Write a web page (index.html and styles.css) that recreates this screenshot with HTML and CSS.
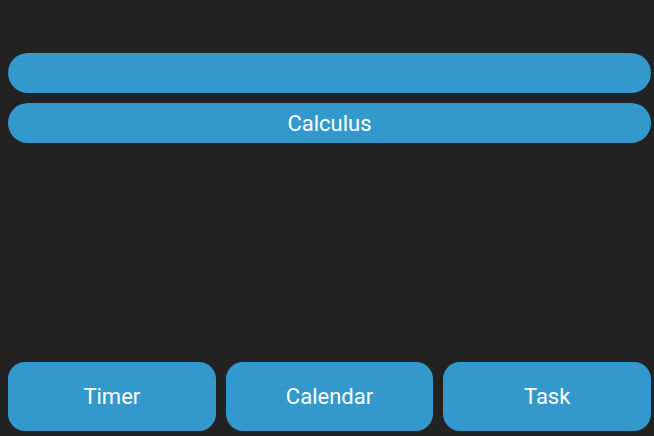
FILE: index.html
```html
<!DOCTYPE html>
<html>
<head>
<meta charset="utf-8">
<link rel="stylesheet" href="styles.css">
</head>
<body>
<div class="app">
  <div class="bars">
    <div class="bar"></div>
    <div class="bar">Calculus</div>
  </div>
  <div class="nav">
    <div class="btn">Timer</div>
    <div class="btn">Calendar</div>
    <div class="btn">Task</div>
  </div>
</div>
</body>
</html>
```
FILE: styles.css
```css
html, body {
  margin: 0;
  padding: 0;
  background: #222222;
}
.app {
  height: 436px;
  box-sizing: border-box;
  padding: 53px 3px 5px 8px;
  display: flex;
  flex-direction: column;
  justify-content: space-between;
  font-family: Roboto, "Liberation Sans", sans-serif;
  color: #ffffff;
}
.bars {
  display: flex;
  flex-direction: column;
  gap: 10px;
}
.bar {
  height: 40px;
  border-radius: 20px;
  background: #3399cc;
  display: flex;
  align-items: center;
  justify-content: center;
  font-size: 22px;
}
.nav {
  display: grid;
  grid-template-columns: 1fr 1fr 1fr;
  gap: 10px;
}
.btn {
  height: 69px;
  border-radius: 17px;
  background: #3399cc;
  display: flex;
  align-items: center;
  justify-content: center;
  font-size: 22px;
}
```
